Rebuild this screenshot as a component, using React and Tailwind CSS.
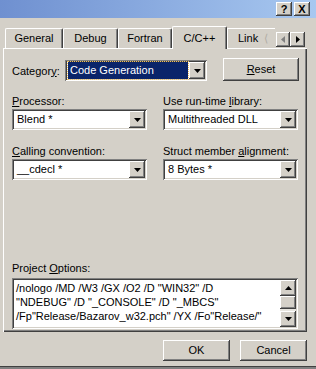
import { ChevronDown } from "lucide-react";

const raised =
  "shadow-[inset_-1px_-1px_#404040,inset_1px_1px_#ffffff,inset_-2px_-2px_#808080,inset_2px_2px_#d4d0c8]";
const sunken =
  "shadow-[inset_1px_1px_#808080,inset_-1px_-1px_#ffffff,inset_2px_2px_#404040,inset_-2px_-2px_#d4d0c8]";

function Arrow({ dir = "down", color = "#000" }) {
  const pts = {
    down: "0,0 7,0 3.5,4",
    up: "0,4 7,4 3.5,0",
    left: "4,0 4,7 0,3.5",
    right: "0,0 0,7 4,3.5",
  }[dir];
  const vertical = dir === "down" || dir === "up";
  return (
    <svg width={vertical ? 7 : 4} height={vertical ? 4 : 7} viewBox={vertical ? "0 0 7 4" : "0 0 4 7"}>
      <polygon points={pts} fill={color} />
    </svg>
  );
}

function Combo({ value, selected = false, className = "" }) {
  return (
    <div className={`flex h-[21px] bg-white p-[2px] ${sunken} ${className}`}>
      <div className="flex flex-1 items-center pl-[1px] pr-[1px]">
        <div
          className={`flex h-full w-full items-center pl-[2px] ${
            selected ? "bg-[#0a246a] text-white outline outline-1 outline-dotted outline-[#f0c060]" : ""
          }`}
        >
          {value}
        </div>
      </div>
      <div className={`flex w-[16px] items-center justify-center bg-[#d4d0c8] ${raised}`}>
        <Arrow dir="down" />
      </div>
    </div>
  );
}

function Label({ children, className = "" }) {
  return <div className={`h-[14px] leading-[14px] ${className}`}>{children}</div>;
}

function Button({ children, className = "" }) {
  return (
    <div className={`flex items-center justify-center bg-[#d4d0c8] ${raised} ${className}`}>{children}</div>
  );
}

function Tab({ label, active = false, className = "" }) {
  return (
    <div
      className={`flex items-center justify-center border-l border-t border-white bg-[#d4d0c8] rounded-tl-[2px] rounded-tr-[2px] shadow-[inset_-1px_0_#808080] border-r border-r-[#404040] ${
        active ? "h-[23px] -mb-[1px] z-10 relative" : "h-[20px]"
      } ${className}`}
    >
      {label}
    </div>
  );
}

export default function App() {
  return (
    <div
      className="relative flex h-[369px] w-[316px] flex-col overflow-hidden bg-[#d4d0c8] text-[11px] text-black"
      style={{ fontFamily: '"Liberation Sans", Arial, sans-serif' }}
    >
      {/* Title bar */}
      <div className="flex h-[18px] items-center justify-end gap-[2px] bg-gradient-to-r from-[#6f90d0] to-[#a8c8f0] pr-[6px]">
        <Button className="h-[14px] w-[16px] text-[11px] font-bold leading-none">?</Button>
        <Button className="h-[14px] w-[16px] text-[11px] font-bold leading-none">X</Button>
      </div>

      {/* Tabs */}
      <div className="mt-[8px] flex h-[22px] items-end pl-[5px]">
        <Tab label="General" className="w-[58px]" />
        <Tab label="Debug" className="w-[55px]" />
        <Tab label="Fortran" className="w-[54px]" />
        <Tab label="C/C++" active className="w-[55px]" />
        <div className="flex h-[20px] w-[48px] items-center border-l border-t border-white pl-[10px]">
          Link
          <span className="ml-[6px] text-[#b0aca4]">⟨</span>
        </div>
        <div className="mb-[1px] ml-[1px] flex">
          <Button className="h-[15px] w-[14px]">
            <Arrow dir="left" color="#808080" />
          </Button>
          <Button className="h-[15px] w-[15px]">
            <Arrow dir="right" />
          </Button>
        </div>
      </div>

      {/* Tab panel */}
      <div className="ml-[3px] flex h-[284px] w-[304px] flex-col border-l border-t border-white px-[8px] pt-[11px] shadow-[inset_-1px_-1px_#404040,inset_-2px_-2px_#808080]">
        <div className="flex items-center">
          <Label className="w-[53px]">
            Categor<span className="underline">y</span>:
          </Label>
          <Combo value="Code Generation" selected className="w-[142px]" />
          <Button className="ml-auto h-[23px] w-[76px] -mt-[3px]">
            <span>
              <span className="underline">R</span>eset
            </span>
          </Button>
        </div>

        <div className="mt-[13px] grid grid-cols-[135px_135px] gap-x-[16px]">
          <div>
            <Label className="mb-[1px]">
              <span className="underline">P</span>rocessor:
            </Label>
            <Combo value="Blend *" />
          </div>
          <div>
            <Label className="mb-[1px]">
              Use run-time <span className="underline">l</span>ibrary:
            </Label>
            <Combo value="Multithreaded DLL" />
          </div>
          <div className="mt-[14px]">
            <Label className="mb-[1px]">
              <span className="underline">C</span>alling convention:
            </Label>
            <Combo value="__cdecl *" />
          </div>
          <div className="mt-[14px]">
            <Label className="mb-[1px]">
              Struct member <span className="underline">a</span>lignment:
            </Label>
            <Combo value="8 Bytes *" />
          </div>
        </div>

        <Label className="mt-[81px]">
          Project <span className="underline">O</span>ptions:
        </Label>
        <div className={`mt-[3px] flex h-[51px] w-[286px] bg-white p-[2px] ${sunken}`}>
          <div className="flex-1 pl-[2px] pt-[1px] leading-[14px]">
            /nologo /MD /W3 /GX /O2 /D "WIN32" /D
            <br />
            "NDEBUG" /D "_CONSOLE" /D "_MBCS"
            <br />
            /Fp"Release/Bazarov_w32.pch" /YX /Fo"Release/"
          </div>
          <div className="flex w-[16px] flex-col bg-[#e8e6e0]">
            <Button className="h-[16px] w-[16px]">
              <Arrow dir="up" />
            </Button>
            <Button className="h-[13px] w-[16px]" />
            <div className="flex-1" />
            <Button className="h-[16px] w-[16px]">
              <Arrow dir="down" />
            </Button>
          </div>
        </div>
      </div>

      {/* Buttons */}
      <div className="mt-[8px] flex justify-end gap-[10px] pr-[9px]">
        <Button className="h-[21px] w-[67px]">OK</Button>
        <Button className="h-[21px] w-[67px]">Cancel</Button>
      </div>

      <div className="absolute bottom-0 left-0 h-[3px] w-full border-t border-[#404040] bg-[#808080]" />
    </div>
  );
}
